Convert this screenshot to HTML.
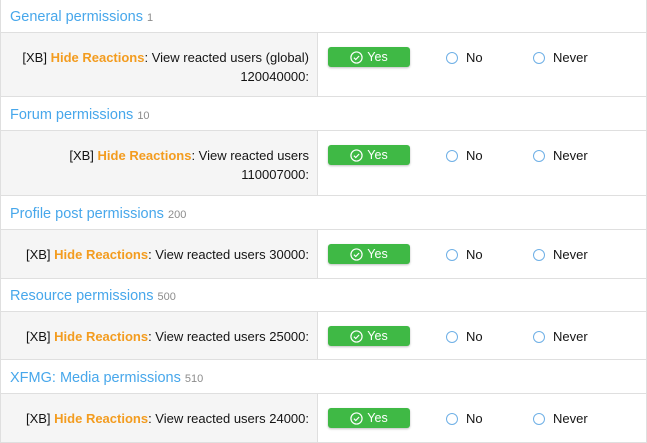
<!DOCTYPE html>
<html><head><style>
*{margin:0;padding:0;box-sizing:border-box}
body{width:647px;height:443px;overflow:hidden;background:#fff;font-family:"Liberation Sans",sans-serif;font-size:13px;color:#141414}
.wrap{border-left:1px solid #dfdfdf;border-right:1px solid #dfdfdf;width:647px}
.h{height:34px;line-height:34px;padding-left:9px;padding-top:2px;font-size:14.5px;color:#47a7eb;border-bottom:1px solid #dfdfdf}
.h small{font-size:11px;color:#8c8c8c}
.r{display:flex;border-bottom:1px solid #dfdfdf}
.l{width:317px;background:#f5f5f5;border-right:1px solid #dfdfdf;text-align:right;padding:15px 8px 0 0;line-height:19px}
.l b{color:#f39c1f}
.c{position:relative;flex:1}
.yes{position:absolute;left:10px;top:14px;width:82px;height:20px;background:#3fb945;border-radius:3px;color:#fff;text-align:center;line-height:21px;font-size:12.5px;box-shadow:0 1px 2px rgba(0,0,0,.25)}
.yes svg{vertical-align:-3px;margin-right:4px}
.rad{position:absolute;top:15px;line-height:20px}
.rad i{display:inline-block;width:12px;height:12px;border:1.5px solid #6fb0e6;border-radius:50%;vertical-align:-2px;margin-right:8px}
</style></head><body><div class="wrap">
<div class="h" style="height:33px;line-height:31px">General permissions <small>1</small></div>
<div class="r" style="height:64px"><div class="l">[XB] <b>Hide Reactions</b>: View reacted users (global)<br>120040000:</div><div class="c"><div class="yes"><svg width="13" height="13" viewBox="0 0 14 14"><circle cx="7" cy="7" r="6" fill="none" stroke="#fff" stroke-width="1.3"/><path d="M4.2 7.2l2 2 3.6-3.8" fill="none" stroke="#fff" stroke-width="1.3"/></svg>Yes</div><div class="rad" style="left:128px"><i></i>No</div><div class="rad" style="left:215px"><i></i>Never</div></div></div>
<div class="h" style="line-height:32px">Forum permissions <small>10</small></div>
<div class="r" style="height:65px"><div class="l">[XB] <b>Hide Reactions</b>: View reacted users<br>110007000:</div><div class="c"><div class="yes"><svg width="13" height="13" viewBox="0 0 14 14"><circle cx="7" cy="7" r="6" fill="none" stroke="#fff" stroke-width="1.3"/><path d="M4.2 7.2l2 2 3.6-3.8" fill="none" stroke="#fff" stroke-width="1.3"/></svg>Yes</div><div class="rad" style="left:128px"><i></i>No</div><div class="rad" style="left:215px"><i></i>Never</div></div></div>
<div class="h" style="line-height:32px">Profile post permissions <small>200</small></div>
<div class="r" style="height:49px"><div class="l">[XB] <b>Hide Reactions</b>: View reacted users 30000:</div><div class="c"><div class="yes"><svg width="13" height="13" viewBox="0 0 14 14"><circle cx="7" cy="7" r="6" fill="none" stroke="#fff" stroke-width="1.3"/><path d="M4.2 7.2l2 2 3.6-3.8" fill="none" stroke="#fff" stroke-width="1.3"/></svg>Yes</div><div class="rad" style="left:128px"><i></i>No</div><div class="rad" style="left:215px"><i></i>Never</div></div></div>
<div class="h" style="height:33px;line-height:31px">Resource permissions <small>500</small></div>
<div class="r" style="height:48px"><div class="l">[XB] <b>Hide Reactions</b>: View reacted users 25000:</div><div class="c"><div class="yes"><svg width="13" height="13" viewBox="0 0 14 14"><circle cx="7" cy="7" r="6" fill="none" stroke="#fff" stroke-width="1.3"/><path d="M4.2 7.2l2 2 3.6-3.8" fill="none" stroke="#fff" stroke-width="1.3"/></svg>Yes</div><div class="rad" style="left:128px"><i></i>No</div><div class="rad" style="left:215px"><i></i>Never</div></div></div>
<div class="h" style="line-height:32px">XFMG: Media permissions <small>510</small></div>
<div class="r" style="height:49px"><div class="l">[XB] <b>Hide Reactions</b>: View reacted users 24000:</div><div class="c"><div class="yes"><svg width="13" height="13" viewBox="0 0 14 14"><circle cx="7" cy="7" r="6" fill="none" stroke="#fff" stroke-width="1.3"/><path d="M4.2 7.2l2 2 3.6-3.8" fill="none" stroke="#fff" stroke-width="1.3"/></svg>Yes</div><div class="rad" style="left:128px"><i></i>No</div><div class="rad" style="left:215px"><i></i>Never</div></div></div>
</div></body></html>
